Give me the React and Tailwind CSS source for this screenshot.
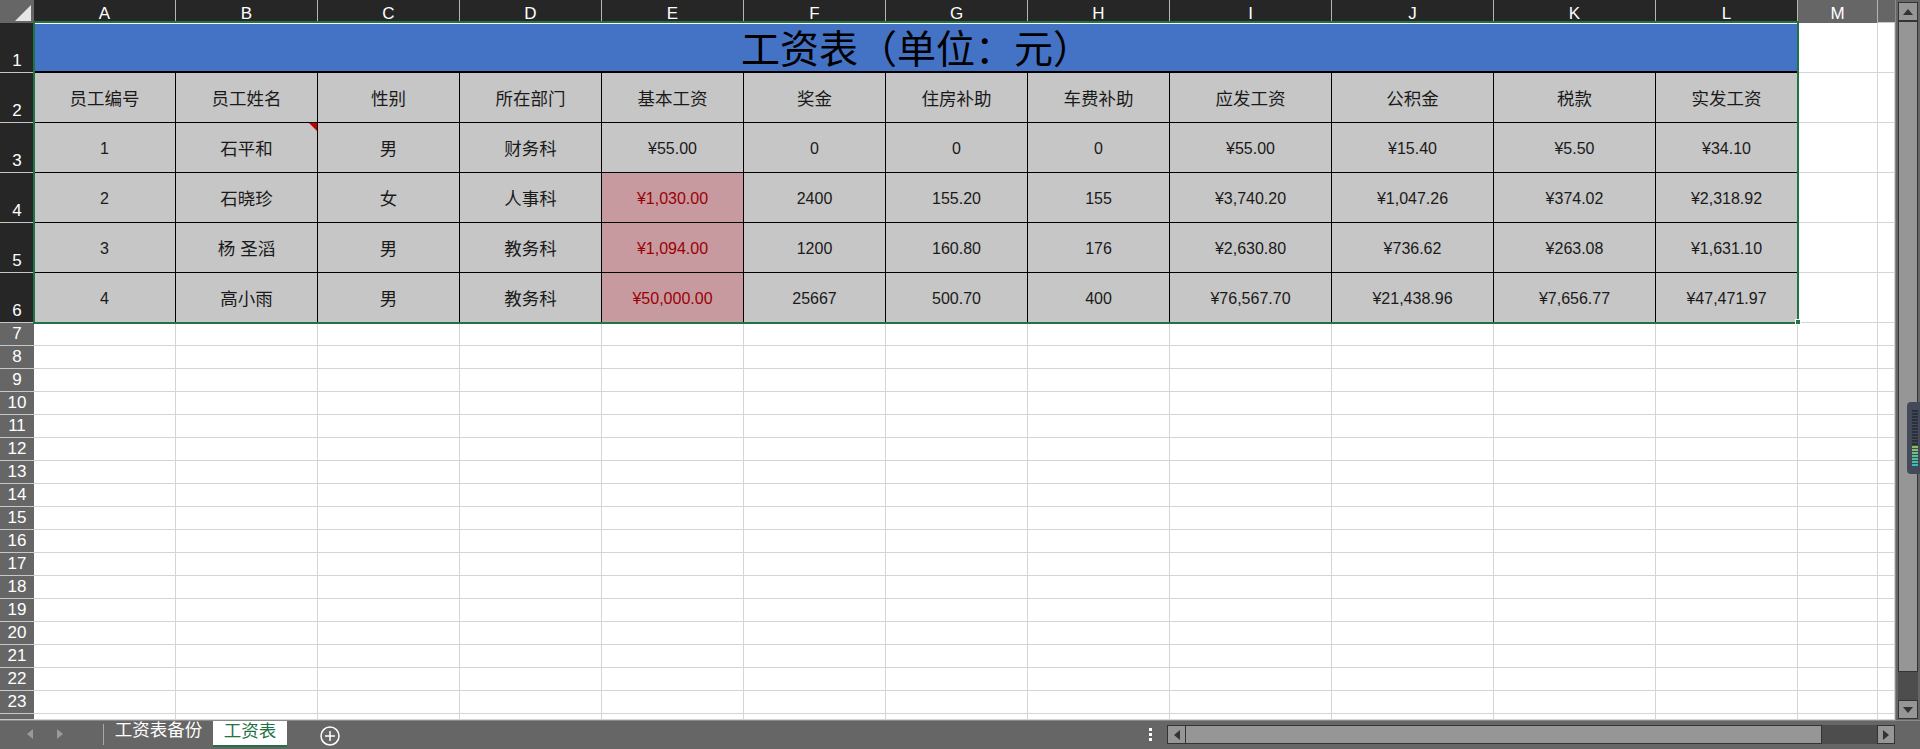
const columns = ["A", "B", "C", "D", "E", "F", "G", "H", "I", "J", "K", "L"];

const tableRows = [
  ["员工编号", "员工姓名", "性别", "所在部门", "基本工资", "奖金", "住房补助", "车费补助", "应发工资", "公积金", "税款", "实发工资"],
  ["1", "石平和", "男", "财务科", "¥55.00", "0", "0", "0", "¥55.00", "¥15.40", "¥5.50", "¥34.10"],
  ["2", "石晓珍", "女", "人事科", "¥1,030.00", "2400", "155.20", "155", "¥3,740.20", "¥1,047.26", "¥374.02", "¥2,318.92"],
  ["3", "杨 圣滔", "男", "教务科", "¥1,094.00", "1200", "160.80", "176", "¥2,630.80", "¥736.62", "¥263.08", "¥1,631.10"],
  ["4", "高小雨", "男", "教务科", "¥50,000.00", "25667", "500.70", "400", "¥76,567.70", "¥21,438.96", "¥7,656.77", "¥47,471.97"],
];

const blankRows = Array.from({ length: 18 }, (_, i) => i + 7);

const lightBars = [
  "#2b303a", "#2b303a", "#2b303a", "#2b303a", "#2b303a", "#2b303a", "#2b303a",
  "#2b303a", "#2b303a", "#2b303a", "#2b303a", "#2b303a",
  "#8fbe5c", "#7fc06a", "#6cc07c", "#5cc08c", "#4cc09a", "#42bfa6", "#3cbcb0",
];

const RowHead = ({ n, selected }) => (
  <div
    className={`flex items-end justify-center overflow-hidden border-b border-[#c8c8c8] pb-[3px] text-[17px] leading-none text-white ${
      selected ? "bg-[#262626]" : "bg-[#666666]"
    }`}
  >
    {n}
  </div>
);

const ColHead = ({ label, selected }) => (
  <div
    className={`flex items-start justify-center overflow-hidden border-r border-[#b5b5b5] pt-[5px] text-[17px] leading-none text-white ${
      selected ? "bg-[#262626]" : "bg-[#666666]"
    }`}
  >
    {label}
  </div>
);

const Cell = ({ value, bad, rowIdx, colIdx }) => (
  <div
    className={`relative flex items-center justify-center border-r border-b border-black pt-[3px] ${
      /^[¥\d]/.test(value) ? "text-[16px]" : "text-[17.5px]"
    } ${bad ? "bg-[#c69a9e] text-[#9c0006]" : "bg-[#c6c6c6] text-[#1a1a1a]"}`}
  >
    {value}
    {rowIdx === 1 && colIdx === 1 && (
      <svg className="absolute right-0 top-0" width="8" height="8" viewBox="0 0 8 8">
        <polygon points="0,0 8,0 8,8" fill="#c00000" />
      </svg>
    )}
  </div>
);

const Blank = () => <div className="border-r border-b border-[#d4d4d4] bg-white" />;

const SheetGrid = () => (
  <div className="relative w-[1895px]">
    <div className="grid grid-cols-[34px_repeat(8,142px)_repeat(3,162px)_142px_80px_17px] grid-rows-[23px_repeat(6,50px)_repeat(17,23px)_6px]">
      {/* column letters */}
      <div className="relative bg-[#666666]">
        <svg className="absolute right-[3px] bottom-[2px]" width="16" height="16" viewBox="0 0 16 16">
          <polygon points="16,0 16,16 0,16" fill="#e6e6e6" />
        </svg>
      </div>
      {columns.map((c) => (
        <ColHead key={c} label={c} selected />
      ))}
      <ColHead label="M" />
      <div className="border-b border-[#c8c8c8] bg-[#666666]" />

      {/* title */}
      <RowHead n={1} selected />
      <div className="col-span-12 flex items-center justify-center border-t border-l border-white border-b-2 border-b-black bg-[#4472c4] pt-[3px] text-[39px] leading-none text-black">
        工资表（单位：元）
      </div>
      <Blank />
      <Blank />

      {/* table */}
      {tableRows.map((row, rowIdx) => (
        <div key={rowIdx} className="contents">
          <RowHead n={rowIdx + 2} selected />
          {row.map((value, colIdx) => (
            <Cell
              key={colIdx}
              value={value}
              rowIdx={rowIdx}
              colIdx={colIdx}
              bad={colIdx === 4 && rowIdx >= 2}
            />
          ))}
          <Blank />
          <Blank />
        </div>
      ))}

      {/* empty rows */}
      {blankRows.map((n) => (
        <div key={n} className="contents">
          <RowHead n={n === 24 ? "" : n} />
          {columns.map((c) => (
            <Blank key={c} />
          ))}
          <Blank />
          <Blank />
        </div>
      ))}
    </div>

    {/* selection box */}
    <div className="pointer-events-none absolute left-[33px] top-[21px] h-[303px] w-[1766px] border-2 border-[#217346]" />
    <div className="pointer-events-none absolute left-[1795px] top-[319px] h-[6px] w-[6px] border border-white bg-[#217346]" />
  </div>
);

const VerticalScroll = () => (
  <div className="flex w-[25px] flex-col border-l border-[#8a8a8a] bg-[#666666] pl-[2px] pt-[2px]">
    <div className="flex h-[717px] w-[20px] flex-col bg-[#4d4d4d]">
      <div className="flex h-[19px] items-center justify-center border border-[#333333] bg-[#969696]">
        <svg width="10" height="6" viewBox="0 0 10 6">
          <polygon points="5,0 10,6 0,6" fill="#333333" />
        </svg>
      </div>
      <div className="h-[651px] border border-[#333333] bg-[#969696]" />
      <div className="flex-1" />
      <div className="flex h-[19px] items-center justify-center border border-[#333333] bg-[#969696]">
        <svg width="10" height="6" viewBox="0 0 10 6">
          <polygon points="0,0 10,0 5,6" fill="#333333" />
        </svg>
      </div>
    </div>
  </div>
);

const BottomBar = () => (
  <div className="flex h-[29px] items-start border-t border-[#8a8a8a] bg-[#666666]">
    <div className="flex h-[28px] w-[103px] items-center gap-[24px] pb-[2px] pl-[27px]">
      <svg width="6" height="10" viewBox="0 0 6 10">
        <polygon points="6,0 6,10 0,5" fill="#9a9a9a" />
      </svg>
      <svg width="6" height="10" viewBox="0 0 6 10">
        <polygon points="0,0 0,10 6,5" fill="#9a9a9a" />
      </svg>
    </div>
    <div className="mt-[3px] h-[21px] w-px bg-[#a8a8a8]" />
    <div className="flex h-[26px] w-[109px] items-center justify-center pb-[6px] text-[17.5px] leading-none text-white">
      工资表备份
    </div>
    <div className="flex h-[26px] w-[74px] items-center justify-center border-b-2 border-[#217346] bg-white pb-[3px] text-[17.5px] leading-none text-[#217346]">
      工资表
    </div>
    <svg className="ml-[33px] mt-[5px]" width="20" height="20" viewBox="0 0 20 20">
      <circle cx="10" cy="10" r="9" fill="none" stroke="#ffffff" strokeWidth="1.5" />
      <path d="M10 5v10M5 10h10" stroke="#ffffff" strokeWidth="1.5" />
    </svg>
    <div className="ml-auto mt-[7px] flex w-[3px] flex-col gap-[2px]">
      <div className="h-[3px] bg-white" />
      <div className="h-[3px] bg-white" />
      <div className="h-[3px] bg-white" />
    </div>
    <div className="ml-[15px] mr-[25px] mt-[4px] flex h-[19px] w-[728px] bg-[#4d4d4d]">
      <div className="flex w-[19px] items-center justify-center border border-[#333333] bg-[#969696]">
        <svg width="6" height="10" viewBox="0 0 6 10">
          <polygon points="6,0 6,10 0,5" fill="#333333" />
        </svg>
      </div>
      <div className="w-[636px] border-y border-r border-[#333333] bg-[#969696]" />
      <div className="flex-1" />
      <div className="flex w-[18px] items-center justify-center border border-[#333333] bg-[#969696]">
        <svg width="6" height="10" viewBox="0 0 6 10">
          <polygon points="0,0 0,10 6,5" fill="#333333" />
        </svg>
      </div>
    </div>
  </div>
);

const App = () => {
  return (
    <div className="relative flex h-[749px] w-[1920px] flex-col overflow-hidden bg-[#666666] font-['Liberation_Sans','Noto_Sans_CJK_SC',sans-serif]">
      <div className="flex h-[720px] overflow-hidden">
        <SheetGrid />
        <VerticalScroll />
      </div>
      <BottomBar />

      {/* floating widget on the screen edge */}
      <svg className="absolute left-[1907px] top-[402px]" width="13" height="72" viewBox="0 0 13 72">
        <path d="M13 0H4a4 4 0 0 0-4 4v64a4 4 0 0 0 4 4h9z" fill="#434958" />
        {lightBars.map((fill, i) => (
          <rect key={i} x="5" y={8 + i * 3} width="6" height="2" fill={fill} />
        ))}
      </svg>
    </div>
  );
};

export default App;
